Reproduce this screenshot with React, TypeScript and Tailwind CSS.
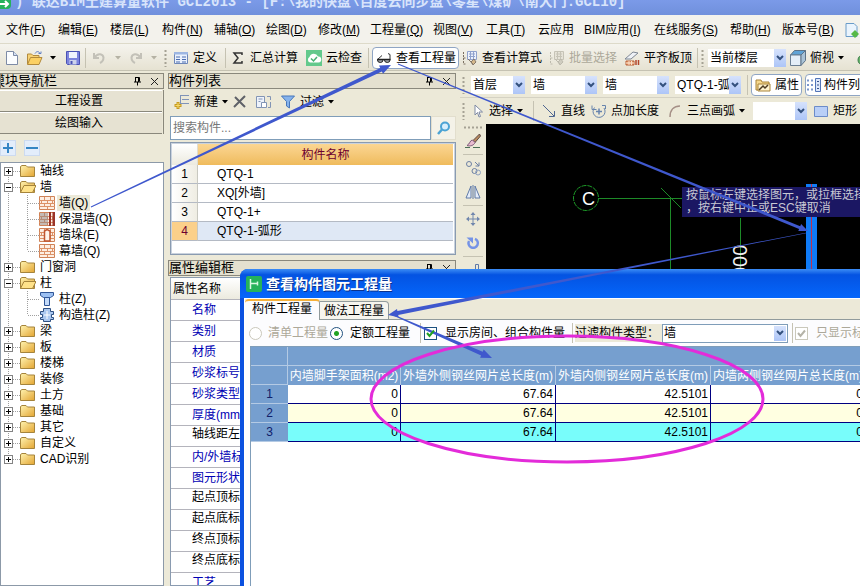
import { useState } from "react";
import type { ReactNode } from "react";

const menus = [
  { label: "文件", mnemonic: "F", width: "w-[52px]" },
  { label: "编辑", mnemonic: "E", width: "w-[52px]" },
  { label: "楼层", mnemonic: "L", width: "w-[52px]" },
  { label: "构件", mnemonic: "N", width: "w-[52px]" },
  { label: "辅轴", mnemonic: "O", width: "w-[52px]" },
  { label: "绘图", mnemonic: "D", width: "w-[52px]" },
  { label: "修改", mnemonic: "M", width: "w-[52px]" },
  { label: "工程量", mnemonic: "Q", width: "w-[63px]" },
  { label: "视图", mnemonic: "V", width: "w-[53px]" },
  { label: "工具", mnemonic: "T", width: "w-[52px]" },
  { label: "云应用", mnemonic: "", width: "w-[46px]" },
  { label: "BIM应用", mnemonic: "I", width: "w-[70px]" },
  { label: "在线服务", mnemonic: "S", width: "w-[76px]" },
  { label: "帮助", mnemonic: "H", width: "w-[52px]" },
  { label: "版本号", mnemonic: "B", width: "w-[62px]" },
];

type Node = { label: string; icon?: "brick" | "insulated" | "pier" | "column" | "struct"; children?: Node[] };

const tree: Node[] = [
  { label: "轴线" },
  {
    label: "墙",
    children: [
      { label: "墙(Q)", icon: "brick" },
      { label: "保温墙(Q)", icon: "insulated" },
      { label: "墙垛(E)", icon: "pier" },
      { label: "幕墙(Q)", icon: "brick" },
    ],
  },
  { label: "门窗洞" },
  {
    label: "柱",
    children: [
      { label: "柱(Z)", icon: "column" },
      { label: "构造柱(Z)", icon: "struct" },
    ],
  },
  { label: "梁" },
  { label: "板" },
  { label: "楼梯" },
  { label: "装修" },
  { label: "土方" },
  { label: "基础" },
  { label: "其它" },
  { label: "自定义" },
  { label: "CAD识别" },
];

const components = ["QTQ-1", "XQ[外墙]", "QTQ-1+", "QTQ-1-弧形"];

const properties = [
  { label: "名称", shared: true },
  { label: "类别", shared: true },
  { label: "材质", shared: true },
  { label: "砂浆标号", shared: true },
  { label: "砂浆类型", shared: true },
  { label: "厚度(mm)", shared: true },
  { label: "轴线距左", shared: false },
  { label: "内/外墙标", shared: true },
  { label: "图元形状", shared: true },
  { label: "起点顶标", shared: false },
  { label: "起点底标", shared: false },
  { label: "终点顶标", shared: false },
  { label: "终点底标", shared: false },
  { label: "工艺", shared: true },
];

const quantityColumns = [
  "内墙脚手架面积(m2)",
  "外墙外侧钢丝网片总长度(m)",
  "外墙内侧钢丝网片总长度(m)",
  "内墙两侧钢丝网片总长度(m)",
];

const quantities = [
  { bg: "bg-white", values: ["0", "67.64", "42.5101", "0"] },
  { bg: "bg-[#ffffe1]", values: ["0", "67.64", "42.5101", "0"] },
  { bg: "bg-[#78fdfb]", values: ["0", "67.64", "42.5101", "0"] },
];

/* ---------- small pieces ---------- */

function Svg({ children, size = 16 }: { children: ReactNode; size?: number }) {
  return (
    <svg width={size} height={size} viewBox="0 0 16 16" fill="none" className="shrink-0" aria-hidden="true">
      {children}
    </svg>
  );
}

function Caret({ muted = false }: { muted?: boolean }) {
  return (
    <svg width="6" height="4" viewBox="0 0 6 4" className="shrink-0" aria-hidden="true">
      <path d="M0 0h6L3 3.5z" fill={muted ? "#b5b2a4" : "#000"} />
    </svg>
  );
}

function Sep() {
  return <span className="h-5 w-px shrink-0 bg-[#c5c2b2]" />;
}

function Grip() {
  return (
    <svg width="3" height="18" className="shrink-0" aria-hidden="true">
      <path d="M1.5 1v17" stroke="#a5a294" strokeWidth="2" strokeDasharray="2 2" />
    </svg>
  );
}

function Tool({
  label,
  icon,
  width,
  caret = false,
  disabled = false,
  title,
}: {
  label?: string;
  icon?: ReactNode;
  width: string;
  caret?: boolean;
  disabled?: boolean;
  title?: string;
}) {
  return (
    <button
      type="button"
      title={title}
      aria-label={label ?? title}
      disabled={disabled}
      className={`flex h-6 shrink-0 items-center gap-1 whitespace-nowrap ${width} ${
        label ? "" : "justify-center"
      } ${disabled ? "text-[#aca899]" : "text-black"}`}
    >
      {icon}
      {label}
      {caret && <Caret />}
    </button>
  );
}

function Combo({ value, width, label }: { value: string; width: string; label: string }) {
  return (
    <span className={`relative flex h-[18px] shrink-0 bg-white ${width}`}>
      <select aria-label={label} className="w-full appearance-none overflow-hidden pr-3 pl-0.5 leading-4 outline-none">
        <option>{value}</option>
      </select>
      <span className="pointer-events-none absolute inset-y-0 right-0 flex w-3 items-center justify-center bg-gradient-to-b from-[#d6e2fc] to-[#adc5f7]">
        <svg width="8" height="6" viewBox="0 0 8 6" fill="none" aria-hidden="true">
          <path d="M1 1l3 3 3-3" stroke="#34517e" strokeWidth="2" />
        </svg>
      </span>
    </span>
  );
}

function PanelHeader({ title, clipped = false }: { title: string; clipped?: boolean }) {
  return (
    <div className="flex h-4 shrink-0 items-center overflow-hidden border border-[#8a887c] bg-[#e4e0cf] text-[13px] leading-[14px]">
      <h2 className={`flex whitespace-nowrap ${clipped ? "w-[56px] justify-end overflow-hidden" : ""}`}>{title}</h2>
      <span className="ml-auto flex items-center gap-2 pr-1">
        <button type="button" aria-label="固定">
          <svg width="9" height="10" viewBox="0 0 9 10" fill="none" aria-hidden="true">
            <path d="M2.5 1.5h4v4M2.5 1v5M1 6h7M4.5 6v3.5M5.5 1v5" stroke="#000" />
          </svg>
        </button>
        <button type="button" aria-label="关闭">
          <svg width="9" height="9" viewBox="0 0 9 9" fill="none" aria-hidden="true">
            <path d="M1 1l7 7M8 1L1 8" stroke="#222" />
          </svg>
        </button>
      </span>
    </div>
  );
}

/* ---------- icons ---------- */

const NewFileIcon = () => (
  <Svg>
    <path d="M2.5 1.5h7l4 4v9h-11z" fill="#fbfdff" stroke="#7d8ba6" />
    <path d="M9.5 1.5v4h4" fill="#d5e2f5" stroke="#7d8ba6" />
  </Svg>
);

const OpenIcon = () => (
  <Svg>
    <path d="M.5 14V4h4L6 5.500h6V8" fill="#f7d274" stroke="#b28a3c" />
    <path d="M.5 14.500l3-7H15l-3 7z" fill="#fbd063" stroke="#b28a3c" />
    <path d="M8 3.500c1.500-2.500 4-2.500 5 0M11.500 3.500H14V1.500" stroke="#5d7dc4" />
  </Svg>
);

const SaveIcon = () => (
  <Svg>
    <path d="M1.500 1.500h13v13h-12l-1-1z" fill="#7d84dd" stroke="#4a52b4" />
    <path d="M4 2h8v6H4z" fill="#f1f4fd" />
    <path d="M4.500 10h7v4.500h-7z" fill="#cdd3ec" />
    <path d="M5.500 11h2v3h-2z" fill="#4a52b4" />
  </Svg>
);

const UndoIcon = ({ flip = false }: { flip?: boolean }) => (
  <Svg>
    <path
      d={flip ? "M13 3v5H8M12.500 7.500C9 2.500 4 4 3.500 7.500 3.500 10 5 12 7 13" : "M3 3v5h5M3.500 7.500C7 2.500 12 4 12.500 7.500c0 2.500-1.500 4.500-3.500 5.500"}
      stroke="#c3c1b8"
      strokeWidth="2"
    />
  </Svg>
);

const DefineIcon = () => (
  <Svg>
    <path d="M1.500 2.500h13v11h-13z" fill="#eaf1fd" stroke="#6e87b8" />
    <path d="M1 2h14v2.500H1z" fill="#9db6e2" />
    <path d="M3 7h4M3 9.500h4M3 12h4M9 7h4M9 9.500h4M9 12h4" stroke="#4a6cb0" />
  </Svg>
);

const SigmaIcon = () => (
  <Svg>
    <path d="M12 5V3H4l4 5-4 5h8v-2" stroke="#333" strokeWidth="1.500" />
  </Svg>
);

const CloudCheckIcon = () => (
  <Svg>
    <path d="M0 0h16v16H0z" fill="#63c98c" />
    <path d="M4 12.500a3 3 0 01-.500-5.500 4.500 4.500 0 018.500-.500 3 3 0 01.500 6z" fill="#fff" />
    <path d="M5 8.500l2.500 2.500L11 7" stroke="#45b171" strokeWidth="1.500" />
  </Svg>
);

const GlassesIcon = () => (
  <Svg>
    <path d="M1.500 9.500H7V10a2.750 2.500 0 01-5.500 0zM8.500 9.500H14V10a2.750 2.500 0 01-5.500 0z" fill="#9ea3aa" stroke="#222" />
    <path d="M1 9.500h13.500" stroke="#222" strokeWidth="1.500" />
    <path d="M1.500 9.500L6 5.500M14 9.500V4.500l-2-1" stroke="#333" />
  </Svg>
);

const FormulaIcon = ({ muted = false }: { muted?: boolean }) => (
  <Svg>
    <path d="M5.500 1.500h9v8h-9z" fill={muted ? "#e6e3d8" : "#edf2fc"} stroke={muted ? "#c6c3b6" : "#90a2cc"} />
    <path d="M7 4h6M7 6.500h6M8.500 2v7M11.500 2v7" stroke={muted ? "#c6c3b6" : "#90a2cc"} />
    <path d="M1.500 2v12h3M1.500 8h2" stroke={muted ? "#bdbaad" : "#7b6f60"} strokeDasharray="2 1" />
    <path d="M6 9l5 5M12 9l2 3-3 3-2-3z" fill={muted ? "#d0cdc0" : "#d5b88b"} stroke={muted ? "#bdbaad" : "#86796b"} />
  </Svg>
);

const AlignIcon = () => (
  <Svg>
    <path d="M1 9l8-7 5 1-7 6z" fill="#eef1f6" stroke="#7e8794" />
    <path d="M2 11h8v4H2z" fill="#e9a16e" stroke="#b85f36" />
    <path d="M12 10v5M14.500 10v5" stroke="#b4462a" strokeWidth="1.500" />
    <path d="M5 11v4M7.500 11v4M2 13h8" stroke="#fbe0cc" />
  </Svg>
);

const CubeIcon = () => (
  <Svg>
    <path d="M.5 5l4-4.500h11L11 5z" fill="#5fa3d6" stroke="#5d7286" />
    <path d="M.5 5H11v10.500H.5z" fill="#e4eef7" stroke="#6b7f93" />
    <path d="M11 5L15.500.500v10L11 15.500z" fill="#a9c2d6" stroke="#5d7286" />
  </Svg>
);

const FilterIcon = () => (
  <Svg>
    <path d="M1.500 2h13l-5 5.500V14L6.500 12V7.500z" fill="#86b3ec" stroke="#4776bb" />
  </Svg>
);

const BrushIcon = () => (
  <Svg>
    <path d="M14.500 1L8 7.500l2 2L15.500 3z" fill="#b98a5e" stroke="#5d4a45" />
    <path d="M7.500 7C5 7 5 11 2 12.500c3 1 7 0 8-3z" fill="#e9bcd0" stroke="#7d5a78" />
    <path d="M0 14.500h5M8 14.500h7" stroke="#4a6f54" />
  </Svg>
);

const CopyShapeIcon = () => (
  <Svg>
    <circle cx="4" cy="4" r="2.500" stroke="#6c80a3" />
    <circle cx="9.500" cy="11" r="2.500" stroke="#6c80a3" />
    <circle cx="13" cy="12.500" r="2.500" stroke="#8ea0bf" />
    <path d="M10 2l4 4M14 2.500V6h-3.500" stroke="#6c80a3" />
  </Svg>
);

const MirrorIcon = () => (
  <Svg>
    <path d="M6 2v12H1zM10 2v12h5z" fill="#e5edf9" stroke="#5f7aa8" />
    <path d="M8 1v14" stroke="#5f7aa8" />
  </Svg>
);

const MoveIcon = () => (
  <Svg>
    <path d="M8 2v12M2 8h12" stroke="#7187ad" />
    <path d="M8 1l2.500 3h-5zM8 15l2.500-3h-5zM1 8l3-2.500v5zM15 8l-3-2.500v5z" fill="#7187ad" />
  </Svg>
);

const RotateIcon = () => (
  <Svg>
    <path d="M10 3.800a4.700 4.700 0 11-6 2.200" stroke="#7593e6" strokeWidth="2.500" />
    <path d="M1.500 2.500H8v6z" fill="#7593e6" />
  </Svg>
);

const ExtendIcon = () => (
  <Svg>
    <path d="M10.500 2.500h3v12h-3zM1 12.500h8" stroke="#5f7aa8" />
  </Svg>
);

const FolderIcon = ({ open = false }: { open?: boolean }) => (
  <Svg>
    <defs>
      <linearGradient id="folder" x1="0" y1="0" x2="1" y2="1">
        <stop offset="0" stopColor="#fff3b0" />
        <stop offset="1" stopColor="#e3a532" />
      </linearGradient>
    </defs>
    <path d="M.500 13.500v-10L2 2.500h4l1.500 1.500h7v9.500z" fill="url(#folder)" stroke="#a5843c" />
    {open && <path d="M.500 13.500L4 6.500h12l-3.500 7z" fill="#ffe28a" stroke="#a5843c" />}
  </Svg>
);

function NodeIcon({ kind }: { kind: Node["icon"] }) {
  if (kind === "column") {
    return (
      <Svg>
        <path d="M1.500 1.500h13v3l-3 2H4.500l-3-2z" fill="#9cc0f2" stroke="#2f5596" />
        <path d="M5.500 6.500h5v8h-5z" fill="#c4dbfa" stroke="#2f5596" />
      </Svg>
    );
  }
  if (kind === "struct") {
    return (
      <Svg>
        <path d="M4.500 1.500h7v3h3v3h-2v3h2v2h-3v2h-7v-2h-3v-2h2v-3h-2v-3h3z" fill="#abc8f0" stroke="#2f5083" />
        <path d="M8 4v8M5 8h6" stroke="#fff" />
      </Svg>
    );
  }
  return (
    <Svg>
      <path d="M.500 1.500h15v13H.500z" fill="#fdeee2" stroke="#cf8257" />
      <path
        d="M0 5.500h16M0 8.500h16M0 11.500h16M5.500 2v3M11.500 2v3M8.500 6v2M5.500 9v2M11.500 9v2M8.500 12v2M2.500 6v2M13.500 6v2"
        stroke="#dc9268"
      />
      {kind === "insulated" && (
        <>
          <path d="M1 2h8v12H1z" fill="#8d8585" fillOpacity=".5" />
          <path d="M10 1h2v14h-2zM13.500 1H16v14h-2.500z" fill="#9b3428" />
        </>
      )}
      {kind === "pier" && <path d="M5.500 14V4L8 2.500 11 4v10z" fill="#fff4ea" stroke="#c0552f" strokeWidth="1.500" />}
    </Svg>
  );
}

const AppIcon = () => (
  <Svg>
    <rect width="16" height="16" rx="2" fill="#25b25b" />
    <path d="M4.500 3v10M5 7.500h6.500M11.500 5.500v4" stroke="#d9f7e3" strokeWidth="1.500" />
  </Svg>
);

/* ---------- panels ---------- */

function NavTree() {
  const [selected, setSelected] = useState("墙(Q)");
  return (
    <ul className="min-h-0 flex-1 overflow-hidden border border-[#8c99a8] bg-white">
      {tree.map((node, i) => (
        <li key={node.label}>
          <div className="flex h-4 items-center pl-[3px]">
            <button type="button" aria-label={`展开 ${node.label}`} className="shrink-0">
              <svg width="16" height="16" fill="none" className="block" aria-hidden="true">
                <path
                  d={i === 0 ? "M4.500 8v8" : i === tree.length - 1 ? "M4.500 0v8" : "M4.500 0v16"}
                  stroke="#a0a0a0"
                  strokeDasharray="1 1"
                />
                <path d="M9 8.500h7" stroke="#a0a0a0" strokeDasharray="1 1" />
                <rect x=".5" y="4.500" width="8" height="8" fill="#fff" stroke="#848484" />
                <path d={node.children ? "M2 8.500h5" : "M2 8.500h5M4.500 6v5"} stroke="#000" />
              </svg>
            </button>
            <FolderIcon open={!!node.children} />
            <span className="pl-1">{node.label}</span>
          </div>
          {node.children?.map((child, j) => (
            <div key={child.label} className="flex h-4 items-center pl-[3px]">
              <svg width="35" height="16" fill="none" className="shrink-0" aria-hidden="true">
                <path d="M4.500 0v16" stroke="#a0a0a0" strokeDasharray="1 1" />
                <path d={j === node.children!.length - 1 ? "M23.500 0v8" : "M23.500 0v16"} stroke="#a0a0a0" strokeDasharray="1 1" />
                <path d="M24 8.500h11" stroke="#a0a0a0" strokeDasharray="1 1" />
              </svg>
              <NodeIcon kind={child.icon} />
              <button
                type="button"
                onClick={() => setSelected(child.label)}
                className={`ml-0.5 px-0.5 leading-4 ${selected === child.label ? "bg-[#ece9d8]" : ""}`}
              >
                {child.label}
              </button>
            </div>
          ))}
        </li>
      ))}
    </ul>
  );
}

function NavPanel() {
  return (
    <aside className="flex w-[164px] shrink-0 flex-col">
      <PanelHeader title="模块导航栏" clipped />
      <div className="mt-px flex shrink-0 flex-col border-r border-[#8a887c] pr-px">
        {["工程设置", "绘图输入"].map((label) => (
          <button
            key={label}
            type="button"
            className="h-[22px] border-t border-b border-t-white border-b-[#8a887c] bg-[#e6e2d2] pr-1"
          >
            {label}
          </button>
        ))}
      </div>
      <div className="flex h-7 shrink-0 items-center gap-2">
        {["M3 8h10M8 3v10", "M2 8h12"].map((d) => (
          <button key={d} type="button" aria-label={d.includes("v") ? "全部展开" : "全部折叠"}>
            <Svg>
              <rect x=".5" y=".5" width="15" height="15" fill="#e3edfb" stroke="#ccdaf0" />
              <path d={d} stroke="#3585c4" strokeWidth="2" />
            </Svg>
          </button>
        ))}
      </div>
      <NavTree />
    </aside>
  );
}

function ComponentPanel() {
  return (
    <section className="flex w-[288px] shrink-0 flex-col">
      <PanelHeader title="构件列表" />
      <div className="mt-px flex h-6 shrink-0 items-center pl-[6px]">
        <Tool
          label="新建"
          caret
          width="w-[58px]"
          icon={
            <Svg>
              <path d="M6 1.500h9M8 5.500h7M6 9.500h9M6.500 1v9" stroke="#7f93b8" />
              <path d="M4 8v7M.5 11.500h7" stroke="#c79b22" strokeWidth="3" />
              <path d="M4 9v5M1.500 11.500h5" stroke="#f7dc6a" />
            </Svg>
          }
        />
        <Tool
          title="删除"
          width="w-4"
          icon={
            <Svg>
              <path d="M3 3l10 10M13 2L2 13" stroke="#5f6268" strokeWidth="2" />
            </Svg>
          }
        />
        <Tool
          title="复制"
          width="w-8"
          icon={
            <Svg>
              <path d="M.5 2.500h8v11h-8z" fill="#eef3fb" stroke="#8295b5" />
              <path d="M2.500 5h4M2.500 7.500h2M5.500 8.500h5v5h-5z" fill="#fff" stroke="#8295b5" />
              <path d="M11 2.500h3.500V6M14.500 8v5.500H12" stroke="#8295b5" />
            </Svg>
          }
        />
        <Tool label="过滤" caret width="w-[58px]" icon={<FilterIcon />} />
      </div>
      <div className="mt-0.5 flex h-6 shrink-0 items-center pl-0.5">
        <input
          aria-label="搜索构件"
          placeholder="搜索构件..."
          className="h-6 w-[261px] border border-[#7f9db9] bg-white px-0.5 outline-none placeholder:text-[#777]"
        />
        <button type="button" aria-label="搜索" className="flex h-6 flex-1 items-center justify-center border border-[#e2decd] bg-[#f4f2e8]">
          <Svg>
            <circle cx="9" cy="6.500" r="4" fill="#d8eefc" stroke="#4ba3d4" strokeWidth="2" />
            <path d="M6 9.500L2 14" stroke="#4ba3d4" strokeWidth="2.500" />
          </Svg>
        </button>
      </div>
      <div className="mt-0.5 ml-0.5 h-[113px] shrink-0 border border-[#8a9bb0] bg-white p-px pr-0.5 shadow-[inset_0_0_0_1px_#c9d2de]">
        <table className="w-full table-fixed border-separate border-spacing-0">
          <colgroup>
            <col className="w-[26px]" />
            <col />
          </colgroup>
          <thead>
            <tr className="h-[21px]">
              <th className="border-r border-[#e0ddd0] bg-gradient-to-b from-white to-[#eceadf]" />
              <th className="bg-gradient-to-b from-[#fbd692] to-[#efbb5c] font-normal text-[#6d0030]">构件名称</th>
            </tr>
          </thead>
          <tbody>
            {components.map((name, i) => {
              const active = i === components.length - 1;
              return (
                <tr key={name} className="h-[19px]">
                  <td
                    className={`border-r border-b border-r-[#c8c8c0] border-b-[#b4bac4] text-center leading-4 ${
                      active ? "bg-[#fbd08a] text-[#6d0030]" : "bg-gradient-to-r from-white to-[#efede3]"
                    }`}
                  >
                    {i + 1}
                  </td>
                  <td className={`border-b border-[#b4bac4] pl-[19px] leading-4 ${active ? "bg-[#dfe8f5]" : ""}`}>{name}</td>
                </tr>
              );
            })}
          </tbody>
        </table>
      </div>
      <div className="mt-[5px] flex min-h-0 flex-1 flex-col">
        <PanelHeader title="属性编辑框" />
        <div className="mt-px ml-0.5 min-h-0 flex-1 overflow-hidden border border-[#8a9bb0] bg-white">
          <table className="w-full border-separate border-spacing-0">
            <thead>
              <tr className="h-[22px]">
                <th className="border-b border-[#b4b4bc] bg-gradient-to-b from-white to-[#eceadf] pl-0.5 text-left font-normal">
                  属性名称
                </th>
              </tr>
            </thead>
            <tbody>
              {properties.map((p) => (
                <tr key={p.label} className="h-[21px]">
                  <td
                    className={`border-b border-[#b4b4bc] pl-[21px] leading-4 ${
                      p.shared ? "text-[#0000b4]" : "align-top text-black"
                    }`}
                  >
                    {p.label}
                  </td>
                </tr>
              ))}
            </tbody>
          </table>
        </div>
      </div>
    </section>
  );
}

function DrawingCanvas() {
  return (
    <div className="relative min-w-0 flex-1 overflow-hidden bg-black">
      <svg className="absolute inset-0 h-full w-full" fill="none">
        <circle cx="100" cy="74" r="12.500" stroke="#1d9a28" strokeDasharray="5 1" />
        <path d="M113 74.500h83M175 64l20 20M184.500 74v100M254.500 94v60" stroke="#1d8a28" />
        <text x="96" y="81" fill="#fff" fontSize="18" fontFamily="Liberation Sans">
          C
        </text>
        <text transform="translate(261 154) rotate(-90)" fill="#f2f2f2" fontSize="20" fontFamily="Liberation Sans">
          000
        </text>
        <path d="M320 60h11v90h-11z" fill="#0f7bf7" />
        <path d="M325.500 60v90" stroke="#c03050" />
      </svg>
      <p className="absolute top-[63px] left-[196px] h-[30px] w-[200px] bg-[#1b1763] pt-0.5 pl-1 leading-[13px] whitespace-nowrap text-[#c8c8d4]">
        按鼠标左键选择图元，或拉框选择
        <br />
        ，按右键中止或ESC键取消
      </p>
    </div>
  );
}

function Workspace() {
  return (
    <section className="flex min-w-0 flex-1 flex-col overflow-hidden">
      <div className="flex h-[25px] shrink-0 items-center gap-[6px] border-b border-[#d5d2c3] pl-0.5">
        <Grip />
        <Combo label="楼层" value="首层" width="w-[54px]" />
        <Combo label="构件大类" value="墙" width="w-[66px]" />
        <Combo label="构件类型" value="墙" width="w-[66px]" />
        <Combo label="构件" value="QTQ-1-弧形" width="w-[66px]" />
        <span className="flex items-center gap-[3px]">
          <Sep />
          <button type="button" className="flex h-[22px] w-[51px] shrink-0 items-center gap-1 rounded-sm border border-[#8fa5c4] bg-white pl-[3px]">
            <Svg>
              <path d="M1 13V3h5l1 2h7v8z" fill="#f6d88c" stroke="#a88339" />
              <path d="M3 7h12v7H3z" fill="#fff3cd" stroke="#a88339" />
              <path d="M4 13l4-4 2 2 3-3" stroke="#4c3b22" strokeWidth="1.500" />
            </Svg>
            <span className="whitespace-nowrap">属性</span>
          </button>
          <button type="button" className="flex h-[22px] w-[82px] shrink-0 items-center gap-0.5 rounded-sm border border-[#8fa5c4] bg-white">
            <Svg>
              <path d="M1 3.500h2M1 8h2M1 12.500h2M5 3.500h2M5 8h2M5 12.500h2" stroke="#7c97cc" strokeWidth="2" />
              <path d="M9.500 1.500h5v13h-5z" fill="#dce7fa" stroke="#5275b8" />
              <path d="M11 4.500h2M11 8h2M11 11.500h2" stroke="#37508a" />
            </Svg>
            <span className="whitespace-nowrap">构件列表</span>
          </button>
        </span>
      </div>
      <div className="flex h-[26px] shrink-0 items-center pl-0.5">
        <Grip />
        <span className="w-1 shrink-0" />
        <Tool
          label="选择"
          caret
          width="w-[64px]"
          icon={
            <Svg>
              <path d="M6 2v10l2.500-2.500L10 14l1.500-.500L10 9h3.500z" fill="#fff" stroke="#7f8aa3" />
            </Svg>
          }
        />
        <Sep />
        <span className="w-[7px] shrink-0" />
        <Tool
          label="直线"
          width="w-[50px]"
          icon={
            <Svg>
              <path d="M2 2l11 11M13.500 8v5.500H8" stroke="#4f6690" />
            </Svg>
          }
        />
        <Tool
          label="点加长度"
          width="w-[76px]"
          icon={
            <Svg>
              <path d="M3.500 4.500a6 6 0 109.500.500M1 2.500v4h4.500M11 2.500h3.500V6" stroke="#6784ad" />
              <path d="M8 5.500v6M5 8.500h6" stroke="#6784ad" strokeWidth="1.500" />
            </Svg>
          }
        />
        <Tool
          label="三点画弧"
          caret
          width="w-[86px]"
          icon={
            <Svg>
              <path d="M3 14C3 7 7 3 13 3" stroke="#a58f86" strokeWidth="1.500" />
            </Svg>
          }
        />
        <Combo label="弧参数" value="" width="w-[54px]" />
        <span className="w-[6px] shrink-0" />
        <Tool
          label="矩形"
          width="w-[52px]"
          icon={
            <Svg>
              <path d="M1.500 3.500h13v10h-13z" fill="#b9cff7" stroke="#6c8cc9" />
            </Svg>
          }
        />
      </div>
      <div className="flex min-h-0 flex-1">
        <div className="flex w-[26px] shrink-0 flex-col items-center pt-0.5">
          <svg width="18" height="3" aria-hidden="true">
            <path d="M0 1.500h18" stroke="#a5a294" strokeWidth="2" strokeDasharray="2 2" />
          </svg>
          <Tool title="格式刷" width="w-6" icon={<BrushIcon />} />
          <span className="my-px h-px w-5 shrink-0 bg-[#c5c2b2]" />
          <Tool title="复制图元" width="w-6" icon={<CopyShapeIcon />} />
          <Tool title="镜像" width="w-6" icon={<MirrorIcon />} />
          <span className="my-px h-px w-5 shrink-0 bg-[#c5c2b2]" />
          <Tool title="移动" width="w-6" icon={<MoveIcon />} />
          <Tool title="旋转" width="w-6" icon={<RotateIcon />} />
          <span className="my-px h-px w-5 shrink-0 bg-[#c5c2b2]" />
          <Tool title="延伸" width="w-6" icon={<ExtendIcon />} />
        </div>
        <DrawingCanvas />
      </div>
    </section>
  );
}

function QuantityDialog() {
  const [mode, setMode] = useState("定额");
  return (
    <div
      role="dialog"
      aria-label="查看构件图元工程量"
      className="absolute top-[269px] right-0 bottom-0 left-[240px] flex flex-col overflow-hidden rounded-tl-lg bg-[#0a50e0]"
    >
      <div className="flex h-[29px] shrink-0 items-center gap-1 bg-gradient-to-b from-[#3b8cf5] via-[#0453e2] via-20% to-[#0566fb] pl-[6px]">
        <AppIcon />
        <h1 className="text-sm font-bold text-white [text-shadow:1px_1px_#0a318c]">查看构件图元工程量</h1>
      </div>
      <div className="ml-1 flex min-h-0 flex-1 flex-col border-t border-l border-white bg-[#ece9d8]">
        <div role="tablist" className="flex h-[21px] shrink-0 items-end">
          <button
            type="button"
            role="tab"
            aria-selected="true"
            className="h-[21px] w-[75px] rounded-t-sm border-t-2 border-r border-t-[#f5b13b] border-r-[#919b9c] bg-[#fcfcfe] pb-1 leading-4"
          >
            构件工程量
          </button>
          <button
            type="button"
            role="tab"
            aria-selected="false"
            className="h-[19px] w-[69px] rounded-tr-sm border-t border-r border-b border-[#919b9c] bg-[#f6f5ee] leading-4"
          >
            做法工程量
          </button>
          <span className="h-full flex-1 border-b border-[#919b9c]" />
        </div>
        <div className="flex h-[26px] shrink-0 items-center bg-[#fcfcfe] whitespace-nowrap">
          <label className="flex w-[85px] shrink-0 items-center gap-[6px] pl-1 text-[#aca899]">
            <input
              type="radio"
              name="mode"
              disabled
              className="size-[13px] shrink-0 appearance-none rounded-full border border-[#c9c7ba] bg-white"
            />
            清单工程量
          </label>
          <label className="flex w-[90px] shrink-0 items-center gap-[7px]">
            <input
              type="radio"
              name="mode"
              checked={mode === "定额"}
              onChange={() => setMode("定额")}
              className="size-[13px] shrink-0 appearance-none rounded-full border border-[#21517f] bg-[radial-gradient(circle,#22a322_0,#22a322_2px,#ffffff_3px)]"
            />
            定额工程量
          </label>
          <Sep />
          <label className="flex w-[151px] shrink-0 items-center gap-2 pl-[3px]">
            <span className="grid size-[13px] shrink-0 place-items-center">
              <input
                type="checkbox"
                defaultChecked
                className="col-start-1 row-start-1 size-[13px] appearance-none border border-[#1c5180] bg-white"
              />
              <svg width="9" height="9" viewBox="0 0 9 9" fill="none" className="z-10 col-start-1 row-start-1">
                <path d="M1 4l2.500 3L8 1.500" stroke="#21a121" strokeWidth="2" />
              </svg>
            </span>
            显示房间、组合构件量
          </label>
          <Sep />
          <label htmlFor="component-type" className="ml-0.5 w-[87px] shrink-0 bg-[#ece9d8] leading-[18px]">
            过滤构件类型：
          </label>
          <span className="relative flex h-[19px] w-[126px] shrink-0 border border-[#7f9db9] bg-white">
            <select id="component-type" className="w-full appearance-none pl-px leading-4 outline-none">
              <option>墙</option>
            </select>
            <span className="pointer-events-none absolute inset-y-px right-px flex w-3 items-center justify-center bg-gradient-to-b from-[#d6e2fc] to-[#adc5f7]">
              <svg width="8" height="6" viewBox="0 0 8 6" fill="none">
                <path d="M1 1l3 3 3-3" stroke="#34517e" strokeWidth="2" />
              </svg>
            </span>
          </span>
          <span className="w-1 shrink-0" />
          <Sep />
          <label className="flex items-center gap-2 pl-0.5 text-[#aca899]">
            <span className="grid size-[13px] shrink-0 place-items-center">
              <input
                type="checkbox"
                defaultChecked
                disabled
                className="col-start-1 row-start-1 size-[13px] appearance-none border border-[#cac8bb] bg-white"
              />
              <svg width="9" height="9" viewBox="0 0 9 9" fill="none" className="z-10 col-start-1 row-start-1">
                <path d="M1 4l2.500 3L8 1.500" stroke="#b5b3a8" strokeWidth="2" />
              </svg>
            </span>
            只显示标准层单层量
          </label>
        </div>
        <div className="min-h-0 flex-1 overflow-hidden bg-[#fcfcfe] pl-[5px]">
          <div className="h-full border-t border-l border-[#7f9db9] bg-white">
            <table className="w-full min-w-[615px] table-fixed border-separate border-spacing-0">
              <colgroup>
                <col className="w-[37px]" />
                <col className="w-[113px]" />
                <col className="w-[155px]" />
                <col className="w-[155px]" />
                <col className="w-[155px]" />
              </colgroup>
              <thead className="bg-[#769fcf] text-white">
                <tr className="h-[19px]">
                  <th className="border-r border-b border-[#b4cae4]" />
                  <th colSpan={4} className="border-b border-[#b4cae4]" />
                </tr>
                <tr className="h-[19px]">
                  <th className="border-r border-b border-[#b4cae4]" />
                  {quantityColumns.map((c) => (
                    <th key={c} className="border-r border-[#b4cae4] p-0 leading-4 font-normal whitespace-nowrap">
                      {c}
                    </th>
                  ))}
                </tr>
              </thead>
              <tbody>
                {quantities.map((row, i) => (
                  <tr key={i} className={`h-[19px] ${row.bg}`}>
                    <th className="border-b border-[#b4cae4] bg-[#769fcf] leading-4 font-normal text-[#10206a]">{i + 1}</th>
                    {row.values.map((v, j) => (
                      <td key={j} className="border-r border-b border-[#000080] pr-0.5 text-right leading-4">
                        {v}
                      </td>
                    ))}
                  </tr>
                ))}
              </tbody>
            </table>
          </div>
        </div>
      </div>
    </div>
  );
}

/* Arrow that starts thin at the tail and widens toward its head */
function TaperedArrow({ from, to, tail, neck, head }: { from: number[]; to: number[]; tail: number; neck: number; head: number }) {
  const dx = to[0] - from[0];
  const dy = to[1] - from[1];
  const len = Math.hypot(dx, dy);
  const ux = dx / len;
  const uy = dy / len;
  const at = (along: number, side: number) =>
    `${(from[0] + ux * along - uy * side).toFixed(1)},${(from[1] + uy * along + ux * side).toFixed(1)}`;
  const shaft = len - head;
  const points = [
    at(0, -tail),
    at(shaft, -neck),
    at(shaft, -head / 2.4),
    at(len, 0),
    at(shaft, head / 2.4),
    at(shaft, neck),
    at(0, tail),
  ].join(" ");
  return <polygon points={points} fill="#3f58cd" />;
}

function Annotations() {
  return (
    <svg className="pointer-events-none absolute inset-0 h-full w-full" fill="none" aria-hidden="true">
      <TaperedArrow from={[91, 207]} to={[391, 65]} tail={0.5} neck={2} head={11} />
      <TaperedArrow from={[398, 64]} to={[808, 231]} tail={0.5} neck={1.5} head={9} />
      <TaperedArrow from={[806, 233]} to={[388, 315]} tail={0.2} neck={2} head={10} />
      <TaperedArrow from={[391, 314]} to={[492, 358]} tail={0.5} neck={2} head={11} />
      <ellipse cx="567" cy="399" rx="196" ry="63" stroke="#e32bd9" strokeWidth="3" />
    </svg>
  );
}

export default function App() {
  return (
    <div className="relative flex h-screen flex-col overflow-hidden bg-[#ece9d8] font-['Liberation_Sans','Noto_Sans_CJK_SC',sans-serif] text-xs text-black">
      <header className="flex h-[15px] shrink-0 items-end overflow-hidden bg-gradient-to-b from-[#7b9ae8] to-[#7090dc]">
        <span className="flex h-[22px] items-start gap-1">
          <span className="h-4 w-[11px] overflow-hidden rounded-br-sm bg-[#25b25b]">
            <svg width="11" height="16" viewBox="0 0 11 16" fill="none">
              <path d="M0 11h7M5 8l3 3-3 3" stroke="#fff" strokeWidth="2" />
            </svg>
          </span>
          <span className="font-['Liberation_Mono','Noto_Sans_CJK_SC',monospace] text-sm leading-[18px] font-bold whitespace-nowrap text-[#d8e4fb]">
            ) 联达BIM土建算量软件 GCL2013 - [F:\我的快盘\百度云同步盘\零星\煤矿\南大门.GCL10]
          </span>
        </span>
      </header>

      <nav className="flex h-[29px] shrink-0 items-center border-b border-[#dddac9] bg-[#f3f2ec] pt-px pl-[6px]">
        {menus.map((m) => (
          <button key={m.label} type="button" className={`shrink-0 text-left whitespace-nowrap ${m.width}`}>
            {m.label}
            {m.mnemonic && (
              <>
                (<span className="underline">{m.mnemonic}</span>)
              </>
            )}
          </button>
        ))}
        <Svg>
          <path d="M2 1.500h8l3 3v10H2z" fill="#eaf4fd" stroke="#6a9cc9" />
          <path d="M11 8l4 4-4 4-4-4z" fill="#57b947" />
        </Svg>
      </nav>

      <div className="flex h-[27px] shrink-0 items-center border-b border-[#c5c2b2] bg-gradient-to-b from-[#f5f4ee] to-[#e6e2d2] pt-px">
        <Tool title="新建" width="w-6" icon={<NewFileIcon />} />
        <Tool title="打开" width="w-[22px]" icon={<OpenIcon />} />
        <Tool title="打开选项" width="w-[14px]" icon={<Caret />} />
        <Tool title="保存" width="w-[25px]" icon={<SaveIcon />} />
        <Sep />
        <Tool title="撤销" width="w-[26px]" disabled icon={<UndoIcon />} />
        <Tool title="撤销选项" width="w-3" disabled icon={<Caret muted />} />
        <Tool title="恢复" width="w-6" disabled icon={<UndoIcon flip />} />
        <Tool title="恢复选项" width="w-3" disabled icon={<Caret muted />} />
        <span className="w-1 shrink-0" />
        <Grip />
        <span className="w-[6px] shrink-0" />
        <Tool label="定义" width="w-[52px]" icon={<DefineIcon />} />
        <Sep />
        <span className="w-1 shrink-0" />
        <Tool label="汇总计算" width="w-[76px]" icon={<SigmaIcon />} />
        <Tool label="云检查" width="w-[62px]" icon={<CloudCheckIcon />} />
        <Sep />
        <button
          type="button"
          className="mx-[3px] flex h-[22px] w-[87px] shrink-0 items-center gap-1 rounded-sm border border-[#8fa5c4] bg-white pl-[3px] whitespace-nowrap"
        >
          <GlassesIcon />
          查看工程量
        </button>
        <Tool label="查看计算式" width="w-[87px]" icon={<FormulaIcon />} />
        <Tool label="批量选择" width="w-[75px]" disabled icon={<FormulaIcon muted />} />
        <Tool label="平齐板顶" width="w-[73px]" icon={<AlignIcon />} />
        <Sep />
        <span className="w-[3px] shrink-0" />
        <Grip />
        <span className="w-1 shrink-0" />
        <Combo label="显示范围" value="当前楼层" width="w-[78px]" />
        <span className="w-1 shrink-0" />
        <Tool label="俯视" caret width="w-[64px]" icon={<CubeIcon />} />
        <Svg>
          <circle cx="9" cy="10" r="5" fill="#69b56b" stroke="#3d7d4a" />
        </Svg>
      </div>

      <main className="flex min-h-0 flex-1 gap-1 pt-0.5">
        <NavPanel />
        <ComponentPanel />
        <Workspace />
      </main>

      <QuantityDialog />
      <Annotations />
    </div>
  );
}
